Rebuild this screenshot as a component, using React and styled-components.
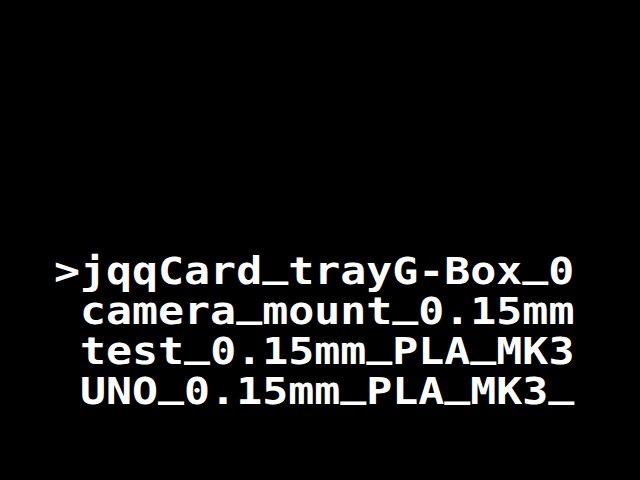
import React from "react";
import styled, { createGlobalStyle } from "styled-components";

const GlobalStyle = createGlobalStyle`
  html, body {
    margin: 0;
    padding: 0;
    background: #000;
  }
`;

const lines = [
  ">jqqCard_trayG-Box_0",
  " camera_mount_0.15mm",
  " test_0.15mm_PLA_MK3",
  " UNO_0.15mm_PLA_MK3_",
];

// the LCD font draws "_" on the baseline, not below it
const renderLine = (line) =>
  line.split(/(_)/).map((part, i) =>
    part === "_" ? <Under key={i}>_</Under> : part
  );

export default function App() {
  return (
    <>
      <GlobalStyle />
      <Screen>
        <Menu>
          {lines.map((line, i) => (
            <Row key={i}>{renderLine(line)}</Row>
          ))}
        </Menu>
      </Screen>
    </>
  );
}

const Screen = styled.div`
  width: 640px;
  height: 480px;
  background: #000;
  box-sizing: border-box;
  padding: 252px 0 0 54px;
  overflow: hidden;
`;

const Menu = styled.div`
  display: flex;
  flex-direction: column;
  transform: scaleX(1.168);
  transform-origin: left top;
`;

const Row = styled.div`
  font-family: "DejaVu Sans Mono", "Liberation Mono", monospace;
  font-weight: bold;
  font-size: 37px;
  line-height: 40px;
  height: 40px;
  color: #fff;
  white-space: pre;
`;

const Under = styled.span`
  color: transparent;
  text-shadow: 0 -8px 0 #fff;
`;
